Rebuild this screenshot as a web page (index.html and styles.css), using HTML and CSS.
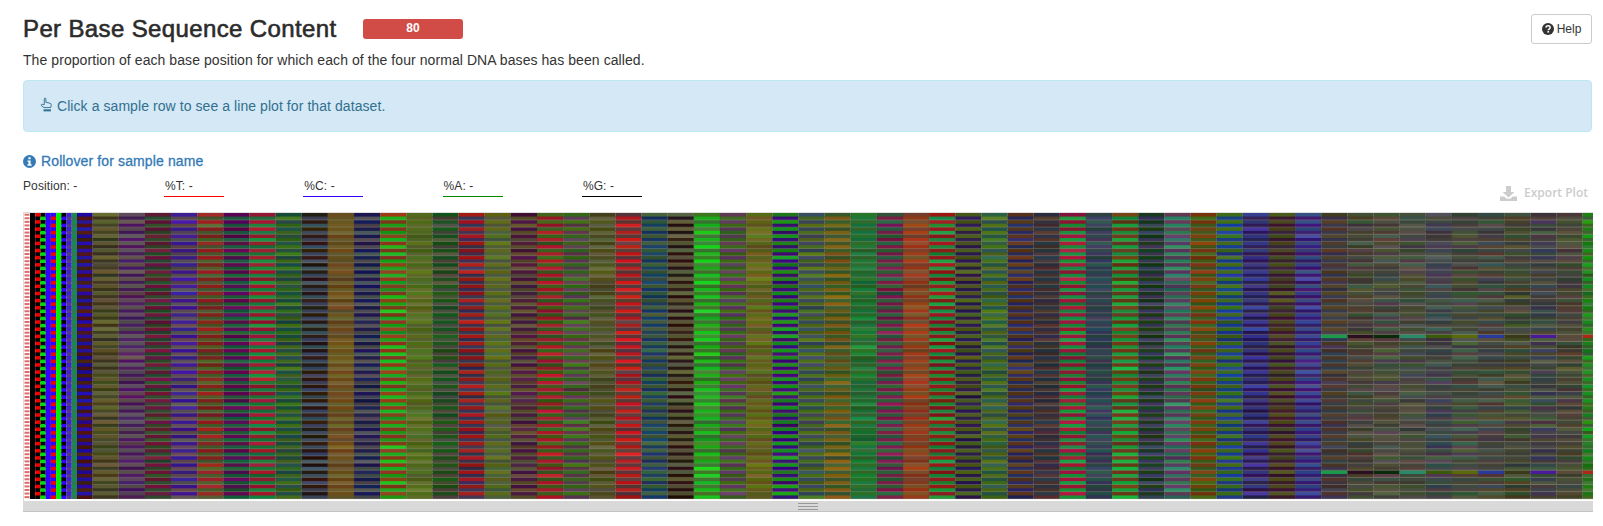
FILE: index.html
```html
<!DOCTYPE html>
<html lang="en">
<head>
<meta charset="utf-8">
<title>Per Base Sequence Content</title>
<link rel="stylesheet" href="styles.css">
</head>
<body>
<section class="module">
  <header class="head">
    <h3 class="title">Per Base Sequence Content</h3>
    <span class="badge">80</span>
    <button class="help" type="button">
      <svg class="ic" viewBox="0 0 14 14" width="12" height="12"><circle cx="7" cy="7" r="7" fill="#333"/><path d="M4.6 5.4C4.7 4 5.7 3.2 7.1 3.2c1.4 0 2.4.8 2.4 2 0 1.9-2.2 1.8-2.2 3.3" fill="none" stroke="#fff" stroke-width="1.7"/><rect x="6.3" y="9.4" width="2" height="1.8" fill="#fff"/></svg>
      Help
    </button>
  </header>
  <p class="desc">The proportion of each base position for which each of the four normal DNA bases has been called.</p>
  <div class="alert">
    <svg class="hand" viewBox="0 0 14 16" width="13" height="15"><path d="M4.6 8.2V2c0-1.3 1.7-1.3 1.7 0v3.6l4.6 1.1c.9.2 1.3.8 1.2 1.6l-.5 3H4.3L1.5 9.2c-.7-1 .4-2 1.3-1.3z" fill="none" stroke="#31708f" stroke-width="1"/><rect x="3.8" y="13.2" width="8" height="2.2" fill="#31708f"/></svg>
    Click a sample row to see a line plot for that dataset.
  </div>
  <div class="rollover">
    <svg class="ic" viewBox="0 0 14 14" width="13" height="13"><circle cx="7" cy="7" r="7" fill="#337ab7"/><rect x="5.8" y="2.4" width="2.4" height="2.2" fill="#fff"/><path d="M4.8 5.8h3.4v4.2h1.1v1.6H4.8V10h1.1V7.4H4.8z" fill="#fff"/></svg>
    Rollover for sample name
  </div>
  <div class="legend">
    <span class="pos">Position: -</span>
    <span class="val val-t">%T: -</span>
    <span class="val val-c">%C: -</span>
    <span class="val val-a">%A: -</span>
    <span class="val val-g">%G: -</span>
    <span class="export">
      <svg class="dl" viewBox="0 0 17 15" width="17" height="15"><path d="M6 0h5v6h3.4L8.5 11.4 2.6 6H6z" fill="#ccc"/><path d="M0 10.5h4.2l2.6 2.3h3.4l2.6-2.3H17V15H0z" fill="#ccc"/></svg>
      Export Plot
    </span>
  </div>
  <div class="plot">
    <canvas id="heat" class="heat" width="1569" height="287"></canvas>
    <div class="handle"><span class="grip"></span></div>
  </div>
</section>
<script src="heatmap.js"></script>
</body>
</html>
```
FILE: styles.css
```css
* { box-sizing: border-box; }
html, body { margin: 0; padding: 0; background: #fff; }
body {
  font-family: "Liberation Sans", Arial, sans-serif;
  font-size: 14px;
  line-height: 20px;
  letter-spacing: 0.07px;
  color: #333;
}
.module { padding: 14px 11px 0 23px; width: 1603px; }
.head { display: flex; align-items: center; height: 29px; }
.title {
  margin: 0;
  width: 313px;
  font-size: 24px;
  line-height: 29px;
  font-weight: 400;
  letter-spacing: 0.37px;
  -webkit-text-stroke: 0.6px #2b2b2b;
  color: #2b2b2b;
  white-space: nowrap;
}
.badge {
  margin-left: 27px;
  width: 100px;
  height: 20px;
  border-radius: 3px;
  background: #d14b47;
  color: #fff;
  font-size: 12px;
  font-weight: 700;
  line-height: 19px;
  text-align: center;
  letter-spacing: 0;
}
.help {
  margin-left: auto;
  width: 61px;
  height: 30px;
  padding: 0;
  border: 1px solid #ccc;
  border-radius: 3px;
  background: #fff;
  color: #333;
  font: 12px/18px "Liberation Sans", Arial, sans-serif;
  display: flex;
  align-items: center;
  justify-content: center;
  gap: 3px;
}
.ic { flex: none; }
.desc { margin: 7px 0 0; line-height: 20px; color: #333; }
.alert {
  margin-top: 10px;
  height: 52px;
  padding: 15px 16px;
  border: 1px solid #bce8f1;
  border-radius: 4px;
  background: #d4e8f6;
  color: #31708f;
  display: flex;
  align-items: center;
  gap: 4px;
}
.hand { flex: none; margin-top: -3px; }
.rollover {
  margin-top: 19px;
  color: #337ab7;
  font-weight: 400;
  -webkit-text-stroke: 0.3px #337ab7;
  letter-spacing: 0.12px;
  display: flex;
  align-items: center;
  gap: 5px;
}
.legend {
  margin-top: 7px;
  height: 24px;
  display: flex;
  align-items: flex-start;
  font-size: 12px;
  line-height: 17px;
  letter-spacing: 0.1px;
}
.pos { width: 141px; }
.val {
  width: 60px;
  margin-right: 79.3px;
  height: 19px;
  padding-left: 1px;
  border-bottom: 1px solid #000;
}
.val-t { border-color: #f00; }
.val-c { border-color: #30f; }
.val-a { border-color: #080; }
.val-g { border-color: #000; margin-right: 0; }
.export {
  margin-left: auto;
  margin-top: 6px;
  margin-right: 4px;
  display: flex;
  align-items: center;
  gap: 7px;
  color: #ccc;
  font-family: "Open Sans", sans-serif;
  font-weight: 600;
  font-size: 12px;
  line-height: 18px;
  letter-spacing: 0;
}
.plot {
  margin-top: 10px;
  width: 1570px;
  border-top: 1px solid #ddd;
  border-left: 1px solid #ddd;
}
.heat { display: block; width: 1569px; height: 287px; }
.handle {
  margin-left: -1px;
  margin-top: 1px;
  width: 1570px;
  height: 11px;
  background: #d9d9d9;
  border-bottom: 1px solid #c4c4c4;
  display: flex;
  justify-content: center;
  align-items: center;
}
.grip {
  width: 20px;
  height: 7px;
  background: repeating-linear-gradient(to bottom, #999 0, #999 1px, transparent 1px, transparent 3px);
}
```
FILE: heatmap.js
```js
(function () {
  var cv = document.getElementById('heat');
  var ctx = cv.getContext('2d');
  var ROWS = 80, RH = 286 / ROWS, X0 = 6, MUTED = 58;
  var seed = 12345;
  function rnd() { seed = (seed * 1664525 + 1013904223) >>> 0; return seed / 4294967296; }
  function hex(s) { return [parseInt(s.slice(0, 2), 16), parseInt(s.slice(2, 4), 16), parseInt(s.slice(4, 6), 16)]; }
  function css(c) { return 'rgb(' + c.map(function (v) { return Math.max(0, Math.min(255, Math.round(v))); }).join(',') + ')'; }

  // [even row colour, odd row colour] per column
  var cols = ('000000 000000,ee0000 000000,000000 00dd00,3300ff 3300ff,3300ff ee0000,00ee00 00ee00,000000 3300ff,4020d0 503a90,1a8a4a 2a7a5a,' +
    '25109a 4a1a10,' +
    '5c5a30 3c3c1c,5a4a50 4a1a60,6a1a3a 2a4a2a,3a1a90 5a4a50,8a2020 4a5a2a,5a0a50 1a5a3a,9a1a30 1a7a3a,1f4a40 3a6a1a,2a1810 3a4a60,' +
    '6a4a1a 6a5a2a,1a1a50 4a4a50,8a3a1a 1aa81a,4f6a1a 5a6a2a,1a501a 4a4a3a,a01a1a 3a3050,5a6a1a 4a5a3a,4a1a40 5a4a30,3a5a1a aa1a2a,' +
    '3a6a1a 5a3a4a,4a4a1a 5a5a3a,5e3a3a c01a1a,3a5a3a 1a3a60,5a5a3a 2a1810,3a7a2a 1ab41a,5a3a5a 3a6a1a,5a6a1a 6a5a20,1a8a1a 3a0a70,' +
    '3a4a5a 4a6a1a,3a5a2a 7a5a10,2a6a2a 1a7a3a,2a5a3a 7a1a4a,7a4a2a 9a3a1a,8a1a1a 1a8a3a,4a5a1a 2a1a4a,2a5a4a 4a6a1a,5a3a1a 2a2a60,' +
    '2a3040 4a3030,9a1a3a 1a8a3a,2a4a4a 3a3a5a,6a3a1a 1aa03a,1a3a1a 3a3a5a,5a3a5a 2a7a5a,7a3a10 3a5a1a,3a6a1a 1a3a8a,3a3a8a 2a1a50,' +
    '4a4a20 3a1a30,3a4a8a 3a1a70,4e3a2a 3a3a4a,44483a 4a4236,46503c 4a4440,444a38 4a4a44,3c4a48 44404a,3c503c 4a4440,3c4c44 4a4038,' +
    '3c4c3a 4a4a30,3c3c4a 444a3a,40443a 4c4434,1a8a1a 3a6a2a').split(',').map(function (p) {
      var q = p.split(' ');
      return [hex(q[0]), hex(q[1])];
    });

  // Rows where the muted right-hand columns are strongly saturated
  var special = ['1a9a4a', '2a1020', '0a2a0a', '2a8a6a', '3a5a0a', '5a6a0a', '2a3a9a', '3a3a1a', '4a1a9a', '5a4a3a', 'aa2a1a'].map(hex);

  // column edges, canvas coordinates
  var edges = [X0], B = 5.22, W = 26.14, i;
  for (i = 0; i < 9; i++) edges.push(edges[edges.length - 1] + B);
  edges.push(edges[edges.length - 1] + 15.66);
  while (edges.length < cols.length) edges.push(edges[edges.length - 1] + W);
  edges.push(1569);

  ctx.fillStyle = '#fff';
  ctx.fillRect(0, 0, 1569, 287);

  // left-hand sample ticks
  ctx.fillStyle = '#e06a6a';
  for (i = 0; i < ROWS; i++) ctx.fillRect(0.5, i * RH + 0.7, 5, 2);

  var c, r;
  for (c = 0; c < cols.length; c++) {
    var x = edges[c], w = edges[c + 1] - x, pure = c < 9;
    for (r = 0; r < ROWS; r++) {
      var y = r * RH, col = cols[c][r % 2].slice(), k;
      if (!pure) {
        var amp = c >= MUTED ? 36 : 24;
        for (k = 0; k < 3; k++) col[k] += (rnd() - 0.5) * amp * (col[k] > 120 ? 1.3 : 0.8);
        var gain = 0.88 + rnd() * 0.24;
        col = col.map(function (v) { return v * gain; });
        if ((r === 34 || r === 72) && c >= 57 && special[c - 57]) col = special[c - 57].slice();
      }
      ctx.fillStyle = css(col);
      ctx.fillRect(x, y, w, 287 - y < RH + 1 ? RH : RH + 1);
    }
  }

  // thin pale line between read pairs, then soft column separators
  for (c = 10; c < cols.length; c++) {
    for (r = 1; r < ROWS; r += 2) {
      ctx.fillStyle = c >= MUTED ? 'rgba(150,150,130,.5)' : 'rgba(150,150,130,.38)';
      ctx.fillRect(edges[c], r * RH + RH - 1 + 0.3, edges[c + 1] - edges[c], 1);
    }
    ctx.fillStyle = 'rgba(50,50,50,.18)';
    ctx.fillRect(edges[c] - 0.5, 0, 1, 286);
  }
})();
```
